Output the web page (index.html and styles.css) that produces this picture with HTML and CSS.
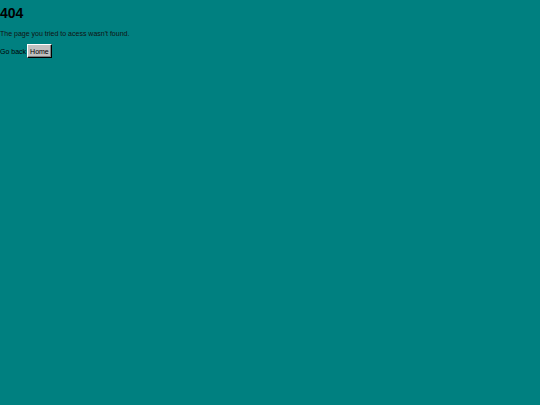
FILE: index.html
```html
<!DOCTYPE html>
<html>
<head>
<meta charset="utf-8">
<link rel="stylesheet" href="styles.css">
</head>
<body>
<main class="page">
<h1 class="title">404</h1>
<p class="msg">The page you tried to acess wasn't found.</p>
<div class="actions"><span class="label">Go back</span><button class="btn">Home</button></div>
</main>
</body>
</html>
```
FILE: styles.css
```css
html, body { margin: 0; padding: 0; background: #008080; }
body { font-family: "Liberation Sans", Arial, sans-serif; color: #000; width: 540px; height: 405px; }
.page { padding-top: 5px; }
.title { font-size: 14px; font-weight: bold; margin: 0; line-height: 16px; }
.msg { font-size: 7px; margin: 8px 0 0; line-height: 9px; color: #111; }
.actions { display: flex; align-items: center; margin-top: 6px; gap: 1px; font-size: 7px; }
.label { line-height: 9px; }
.btn { font-family: "Liberation Sans", Arial, sans-serif; font-size: 7px; background: #c0c0c0; color: #000; border: 1px solid; border-color: #fff #000 #000 #fff; box-shadow: inset -1px -1px #808080; padding: 2px 2px; height: 14px; margin: 0; }
```
